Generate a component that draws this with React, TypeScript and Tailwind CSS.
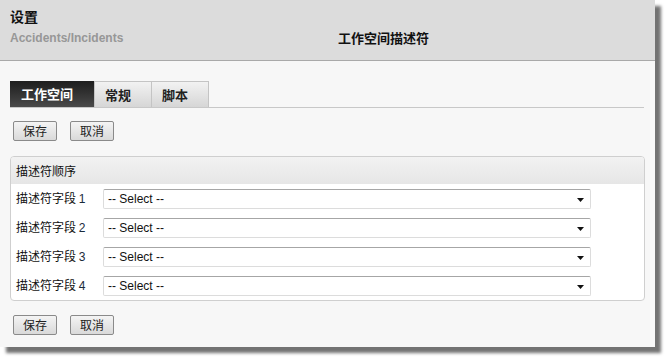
import React from "react";

const cjk = { fontFamily: '"Noto Sans CJK SC", "Liberation Sans", sans-serif' };
const latin = { fontFamily: '"Liberation Sans", Arial, sans-serif' };

function Btn({ label }: { label: string }) {
  return (
    <button
      className="h-[20px] w-[44px] border border-[#8a8a8a] rounded-[2px] bg-gradient-to-b from-[#f4f4f4] to-[#d9d9d9] text-[12px] leading-[18px] text-[#222] flex items-center justify-center"
      style={cjk}
    >
      {label}
    </button>
  );
}

function Row({ n }: { n: number }) {
  return (
    <div className="flex items-center h-[29px]">
      <div className="w-[87px] text-[12px] text-[#111] whitespace-nowrap" style={cjk}>
        描述符字段 <span className="text-[#1a2a3a]" style={latin}>{n}</span>
      </div>
      <div className="relative w-[488px] h-[20px] bg-white border border-[#dcdcdc] border-t-[#a6a6a6] rounded-[2px] flex items-center pl-[4px]">
        <span className="text-[12px] text-[#111]" style={latin}>-- Select --</span>
        <svg className="absolute right-[6px] top-[8px]" width="7" height="4" viewBox="0 0 7 4">
          <path d="M0 0H7L3.5 4Z" fill="#111" />
        </svg>
      </div>
    </div>
  );
}

export default function App() {
  return (
    <div className="w-[669px] h-[361px] bg-white">
      <div className="w-[655px] h-[347px] bg-[#f7f7f7] shadow-[6px_6px_3px_rgba(0,0,0,0.55)]">
        <div className="h-[61px] bg-[#dcdcdc] border-b border-[#a9a9a9] pl-[10px] pt-[7px]">
          <div className="text-[14px] leading-[18px] font-bold text-[#111]" style={cjk}>设置</div>
          <div className="flex items-center mt-[5px] h-[16px]">
            <span
              className="w-[328px] text-[12px] font-bold text-[#979797]"
              style={{ fontFamily: '"Liberation Sans Narrow", "Liberation Sans", sans-serif' }}
            >
              Accidents/Incidents
            </span>
            <span className="text-[13px] font-bold text-[#111]" style={cjk}>工作空间描述符</span>
          </div>
        </div>

        <div className="px-[10px] pr-[11px] mt-[20px]">
          <div className="flex h-[27px] border-b border-[#c8c8c8]">
            <div className="w-[84px] h-[26px] bg-gradient-to-b from-[#1e1e1e] to-[#4a4a4a] text-white font-bold text-[13px] flex items-center pl-[11px]" style={cjk}>
              工作空间
            </div>
            <div className="w-[58px] h-[26px] bg-gradient-to-b from-[#f2f2f2] to-[#d6d6d6] border border-b-0 border-[#c4c4c4] text-[#222] font-bold text-[13px] flex items-center pl-[10px]" style={cjk}>
              常规
            </div>
            <div className="w-[57px] h-[26px] bg-gradient-to-b from-[#f2f2f2] to-[#d6d6d6] border border-l-0 border-b-0 border-[#c4c4c4] text-[#222] font-bold text-[13px] flex items-center pl-[10px]" style={cjk}>
              脚本
            </div>
          </div>
        </div>

        <div className="flex gap-[13px] pl-[13px] mt-[13px]">
          <Btn label="保存" />
          <Btn label="取消" />
        </div>

        <div className="ml-[10px] mt-[15px] w-[635px] h-[145px] border border-[#cfcfcf] rounded-[4px] bg-white overflow-hidden">
          <div className="h-[27px] bg-gradient-to-b from-[#f2f2f2] to-[#e6e6e6] flex items-center pl-[5px] text-[12px] text-[#111]" style={cjk}>
            描述符顺序
          </div>
          <div className="pl-[5px]">
            <Row n={1} />
            <Row n={2} />
            <Row n={3} />
            <Row n={4} />
          </div>
        </div>

        <div className="flex gap-[13px] pl-[13px] mt-[14px]">
          <Btn label="保存" />
          <Btn label="取消" />
        </div>
      </div>
    </div>
  );
}
